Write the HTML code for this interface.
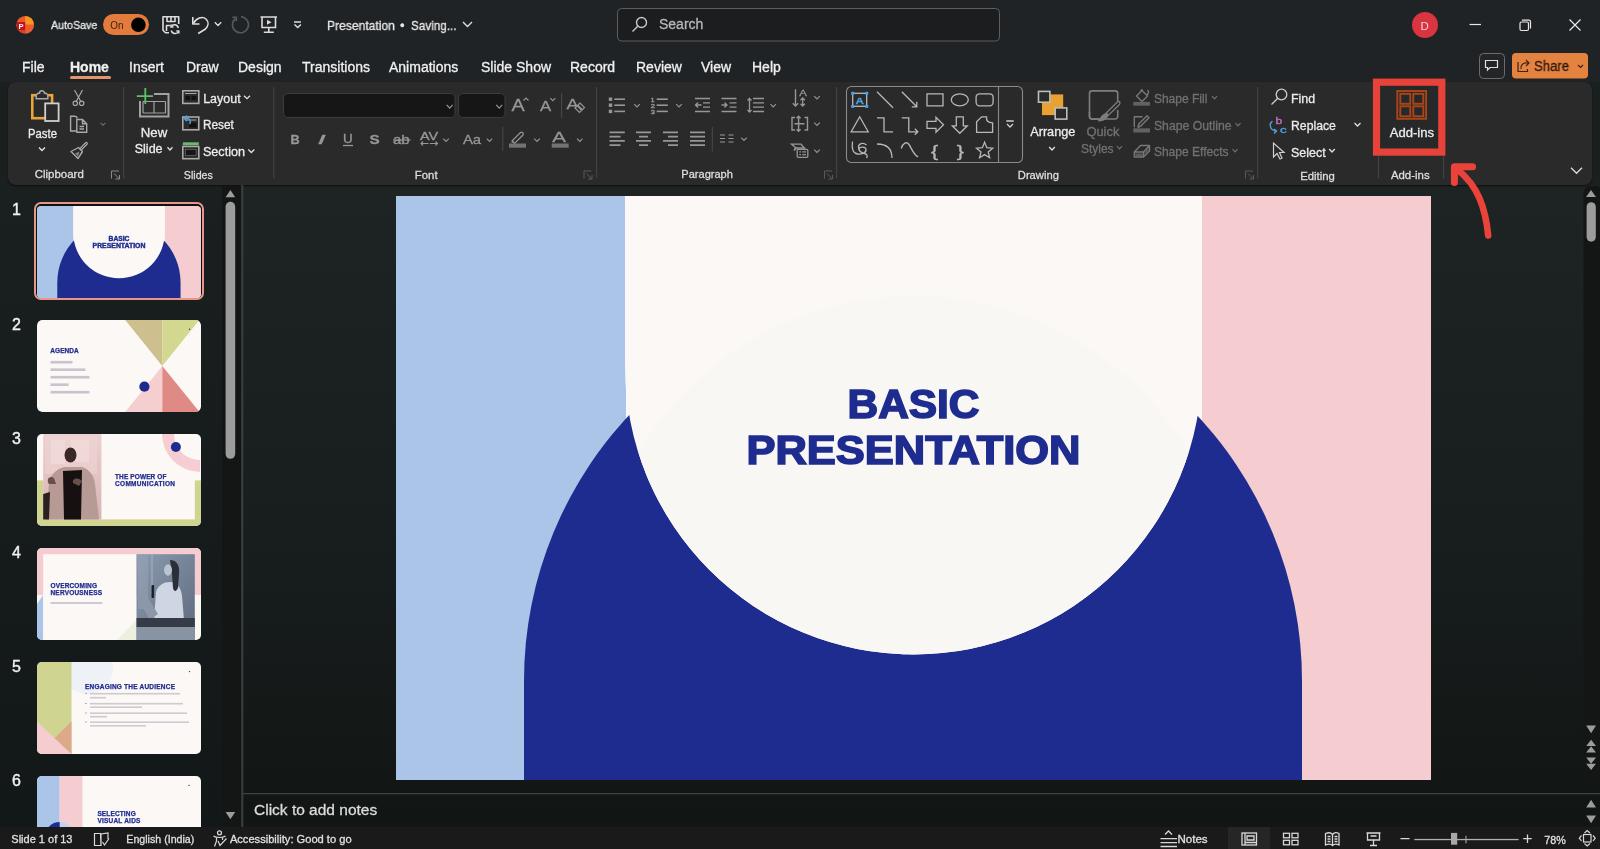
<!DOCTYPE html>
<html><head><meta charset="utf-8">
<style>
*{margin:0;padding:0;box-sizing:border-box}
html,body{width:1600px;height:849px;overflow:hidden;background:#1a1f1f;font-family:"Liberation Sans",sans-serif;color:#e6e6e6}
.a{position:absolute}
.t{position:absolute;white-space:nowrap;line-height:1;-webkit-text-stroke:0.3px currentColor}
svg text{font-family:"Liberation Sans",sans-serif}
svg,.t{will-change:transform}
</style></head><body>
<div class="a" style="left:0;top:0;width:1600px;height:82px;background:#1f2326"></div>
<div class="a" style="left:0;top:185px;width:1600px;height:642px;background:linear-gradient(#1e2324,#181d1d 55%,#111615)"></div>
<div class="a" style="left:0;top:185px;width:222px;height:642px;background:linear-gradient(#1a1f20,#121717)"></div>
<div class="a" style="left:8px;top:82px;width:1584px;height:102.5px;background:#2a2a2a;border-radius:8px;box-shadow:0 1px 1.5px #0c0e0e"></div>
<div class="a" style="left:0;top:827px;width:1600px;height:22px;background:#1a1a1a"></div>
<div class="a" style="left:222px;top:186px;width:19px;height:641px;background:#141616"></div>
<svg class="a" style="left:0;top:185px" width="1600" height="642"><path d="M225.6 12.3 L230.4 5 L235.2 12.3 Z" fill="#9c9c9c"/><rect x="225.6" y="16.8" width="9.6" height="257" rx="4.8" fill="#9c9c9c"/><path d="M225.6 627 L230.4 634.3 L235.2 627 Z" fill="#9c9c9c"/><rect x="241.3" y="0" width="2" height="642" fill="#394040"/><rect x="243" y="608" width="1357" height="1.3" fill="#3a4242"/><rect x="1583.5" y="1" width="20" height="607" rx="7" fill="#141616"/><path d="M1586 12 L1591 5 L1596 12 Z" fill="#9c9c9c"/><rect x="1586.6" y="17.2" width="9.2" height="39.5" rx="4.6" fill="#9c9c9c"/><path d="M1586.2 540.6 L1591.1 548.3 L1596 540.6 Z" fill="#9c9c9c"/><path d="M1586.2 561 L1591.1 554.7 L1596 561 Z M1586.2 567.4 L1591.1 561.2 L1596 567.4 Z" fill="#9c9c9c"/><path d="M1586.2 572.4 L1591.1 578.7 L1596 572.4 Z M1586.2 578.8 L1591.1 585 L1596 578.8 Z" fill="#9c9c9c"/><path d="M1586.2 622.6 L1591.1 614.8 L1596 622.6 Z" fill="#9c9c9c"/><path d="M1586.2 630.4 L1591.1 638.2 L1596 630.4 Z" fill="#9c9c9c"/></svg>
<div class="t" style="left:254px;top:801.5px;font-size:15.5px;color:#dcdcdc;transform:scaleX(1.0);transform-origin:0 0">Click to add notes</div>
<!-- TITLE BAR -->
<svg class="a" style="left:0;top:0" width="1600" height="82">
  <!-- ppt logo -->
  <circle cx="25.2" cy="24.8" r="8.8" fill="#ea5a2e"/>
  <path d="M25.2 24.8 V16 A8.8 8.8 0 0 1 34 24.8 Z" fill="#f7961e"/>
  <path d="M25.2 24.8 H34 A8.8 8.8 0 0 1 25.2 33.6 Z" fill="#ec5d33"/>
  <path d="M16.4 24.8 A8.8 8.8 0 0 0 25.2 33.6 V24.8 Z" fill="#d8402a"/>
  <rect x="17" y="22" width="8.2" height="8" rx="1" fill="#c0141c"/>
  <text x="18.6" y="29.3" font-family="Liberation Sans" font-weight="bold" font-size="7.5" fill="#fff">P</text>
  <!-- toggle -->
  <rect x="103" y="14" width="46" height="21" rx="10.5" fill="#e27b3b"/>
  <circle cx="138.4" cy="24.8" r="7.3" fill="#000"/>
  <text x="110.3" y="28.8" font-family="Liberation Sans" font-size="10.2" fill="#3a2416" textLength="13.2" lengthAdjust="spacingAndGlyphs">On</text>
  <!-- save icon -->
  <g fill="none" stroke="#dcdcdc" stroke-width="1.6" stroke-linejoin="round">
    <path d="M169 32.7 H165.5 L163 30.2 V16.8 H178.7 V24"/>
    <path d="M167 17 V21.5 H175 V17 M171 17 V21.5"/>
    <path d="M166.5 31 V25.5 H170"/>
  </g>
  <g fill="none" stroke="#dcdcdc" stroke-width="1.5">
    <path d="M178.3 28 A4 4 0 0 0 171 26.5 M171.3 30.5 A4 4 0 0 0 178.7 31.5"/>
    <path d="M171 24.5 V27 H173.5 M178.8 33.5 V31 H176.3"/>
  </g>
  <!-- undo -->
  <g fill="none" stroke="#dcdcdc" stroke-width="1.6" stroke-linejoin="round">
    <path d="M192.8 17 V24 H199.5"/>
    <path d="M193.5 23.5 C196 18 202.5 16 206 19 C209 22 208.5 26 205.5 29 L198.2 33.5"/>
    <path d="M214.8 22.3 L218 25.5 L221.2 22.3" stroke-width="1.4"/>
  </g>
  <!-- redo (dim) -->
  <g fill="none" stroke="#56595b" stroke-width="1.6">
    <path d="M235.5 18.5 A8 8 0 1 0 241 16.8"/>
    <path d="M232.3 17.3 H236.3 V21.3"/>
  </g>
  <!-- present -->
  <g fill="none" stroke="#dcdcdc" stroke-width="1.6">
    <path d="M260.5 17 H277 M262 17.5 V27.5 H275.5 V17.5 M268.8 27.5 V32 M263.8 32.3 H273.8"/>
  </g>
  <path d="M267 19.8 L271.5 22.3 L267 24.8 Z" fill="#dcdcdc"/>
  <!-- customize -->
  <g fill="none" stroke="#dcdcdc" stroke-width="1.5">
    <path d="M294 22 H301"/>
    <path d="M294.5 24.5 L297.7 27.5 L300.9 24.5"/>
  </g>
  <!-- title chevron -->
  <path d="M463 22 L467.5 26.5 L472 22" fill="none" stroke="#e0e0e0" stroke-width="1.4"/>
  <!-- search box -->
  <rect x="617.5" y="8.5" width="382" height="32.5" rx="4" fill="#1c1d1e" stroke="#5c5f61" stroke-width="1"/>
  <g fill="none" stroke="#c8c8c8" stroke-width="1.4">
    <circle cx="641.5" cy="22.5" r="5"/>
    <path d="M638 26 L632.5 31.5"/>
  </g>
  <!-- avatar -->
  <circle cx="1425" cy="25" r="13" fill="#d93540"/>
  <text x="1420.5" y="29.5" font-family="Liberation Sans" font-size="11.5" fill="#f4d0d0">D</text>
  <!-- window controls -->
  <path d="M1469.5 24.5 H1481" stroke="#e8e8e8" stroke-width="1.2"/>
  <g fill="none" stroke="#e8e8e8" stroke-width="1.2">
    <rect x="1520" y="22" width="8.5" height="8.5" rx="1.5"/>
    <path d="M1522 20.2 H1529 A1.5 1.5 0 0 1 1530.5 21.7 V28.5"/>
  </g>
  <path d="M1569.5 19.5 L1580.5 30.5 M1580.5 19.5 L1569.5 30.5" stroke="#e8e8e8" stroke-width="1.2"/>
  <!-- comment button -->
  <rect x="1479.5" y="53.5" width="25" height="25" rx="4" fill="#232527" stroke="#6a6d70" stroke-width="1"/>
  <path d="M1485.5 60.5 H1497.5 V67.5 H1490 L1487.5 70 V67.5 H1485.5 Z" fill="none" stroke="#e0e0e0" stroke-width="1.2"/>
  <!-- share button -->
  <rect x="1512" y="53" width="76" height="25.5" rx="4" fill="#e4823f"/>
  <g fill="none" stroke="#3a2414" stroke-width="1.2">
    <path d="M1518 62 V71.5 H1527.5 V69"/>
    <path d="M1521 69 A5 5 0 0 1 1527 63 H1529 M1526 60 L1529 63 L1526 66"/>
    <path d="M1578 65 L1580.5 67.5 L1583 65"/>
  </g>
  <!-- Home underline -->
  <rect x="70" y="76" width="41" height="3" rx="1.5" fill="#e5956b"/>
</svg>
<div class="t" style="left:50.6px;top:20.3px;font-size:11.4px;color:#ececec;transform:scaleX(0.94);transform-origin:0 0">AutoSave</div>
<div class="t" style="left:327px;top:18.5px;font-size:13px;color:#e8e8e8;transform:scaleX(0.93);transform-origin:0 0">Presentation</div><div class="t" style="left:400px;top:18.5px;font-size:13px;color:#e8e8e8">•</div><div class="t" style="left:411px;top:18.5px;font-size:13px;color:#e8e8e8;transform:scaleX(0.9);transform-origin:0 0">Saving...</div>
<div class="t" style="left:659px;top:17px;font-size:14px;color:#b8b8b8">Search</div>
<div class="t" style="left:1534.3px;top:59.6px;font-size:13.8px;color:#2c1a0e;transform:scaleX(0.95);transform-origin:0 0">Share</div>
<div class="t" style="left:22px;top:60px;font-size:14px;color:#f0f0f0">File</div>
<div class="t" style="left:70px;top:60px;font-size:14px;font-weight:bold;color:#f0f0f0">Home</div>
<div class="t" style="left:129px;top:60px;font-size:14px;color:#f0f0f0">Insert</div>
<div class="t" style="left:186px;top:60px;font-size:14px;color:#f0f0f0">Draw</div>
<div class="t" style="left:238px;top:60px;font-size:14px;color:#f0f0f0">Design</div>
<div class="t" style="left:302px;top:60px;font-size:14px;color:#f0f0f0">Transitions</div>
<div class="t" style="left:389px;top:60px;font-size:14px;color:#f0f0f0">Animations</div>
<div class="t" style="left:481px;top:60px;font-size:14px;color:#f0f0f0">Slide Show</div>
<div class="t" style="left:570px;top:60px;font-size:14px;color:#f0f0f0">Record</div>
<div class="t" style="left:636px;top:60px;font-size:14px;color:#f0f0f0">Review</div>
<div class="t" style="left:701px;top:60px;font-size:14px;color:#f0f0f0">View</div>
<div class="t" style="left:752px;top:60px;font-size:14px;color:#f0f0f0">Help</div>


<svg class="a" style="left:0;top:0" width="1600" height="260" font-family="Liberation Sans">
<rect x="32.3" y="95.2" width="19.8" height="23" fill="none" stroke="#e9a43a" stroke-width="2.6"/>
<path d="M36.2 98.8 V95 L38 93.2 H39.5 A2.5 2.5 0 0 1 44.5 93.2 H46 L47.8 95 V98.8 Z" fill="#2a2a2a" stroke="#a8a8a8" stroke-width="1.5"/>
<rect x="45.2" y="103.4" width="13.4" height="17.6" fill="#2a2a2a" stroke="#d0d0d0" stroke-width="1.8"/>
<text x="28.0" y="138.4" font-size="12.5" fill="#ececec" stroke="#ececec" stroke-width="0.3" textLength="29.0" lengthAdjust="spacingAndGlyphs" >Paste</text>
<path d="M39.0 147.5 L42.0 150.5 L45.0 147.5" fill="none" stroke="#e0e0e0" stroke-width="1.4"/>
<g fill="none" stroke="#a9a9a9" stroke-width="1.2"><circle cx="75.3" cy="103.3" r="2.2"/><circle cx="81.7" cy="103.3" r="2.2"/><path d="M76.3 101.3 L82.5 90 M80.7 101.3 L74.5 90"/></g>
<g fill="none" stroke="#a9a9a9" stroke-width="1.4"><path d="M76 131 H70.6 V116.3 H75 Q76.8 116.3 77.3 118.5"/><path d="M76.8 119.5 H82.5 L86.7 123.7 V132.2 H76.8 Z M82.5 119.5 V123.7 H86.7"/><path d="M79.5 126.5 H84 M79.5 129 H84"/></g>
<path d="M100.5 122.8 L103.0 125.2 L105.5 122.8" fill="none" stroke="#6e6e6e" stroke-width="1.1"/>
<path d="M86.3 143.5 L81 148.8" stroke="#a9a9a9" stroke-width="3.2" stroke-linecap="round"/><path d="M86.3 143.5 L81 148.8" stroke="#2a2a2a" stroke-width="1" stroke-linecap="round"/>
<path d="M71 151.5 L78.5 147.5 L82.5 151.5 L78 158.5 Z" fill="none" stroke="#a9a9a9" stroke-width="1.4" stroke-linejoin="round"/>
<path d="M75 153.5 L79.5 151.5 L78 156.5 Z" fill="#a9a9a9" opacity="0.7"/>
<text x="34.7" y="178.2" font-size="11.5" fill="#dedede" stroke="#dedede" stroke-width="0.3" textLength="49.1" lengthAdjust="spacingAndGlyphs" >Clipboard</text>
<g fill="none" stroke="#8a8a8a" stroke-width="1"><path d="M111.5 178.5 V171.0 H119"/><path d="M114 173.5 L119.5 179.0 M115.5 179.0 H119.5 V175.0"/></g>
<path d="M123.7 87 V178" stroke="#474747" stroke-width="1"/>
<g fill="none" stroke="#a2a2a2" stroke-width="2"><rect x="140" y="94" width="28.5" height="22.5"/><path d="M143 101.5 H165.5 M154 101.5 V113 M143 113 H165.5 M143 101.5 V113 M165.5 101.5 V113" stroke-width="1.2"/></g>
<rect x="136" y="92" width="18" height="9" fill="#2a2a2a"/>
<path d="M136.8 96.2 H153 M145.3 88 V104" stroke="#5cc06a" stroke-width="1.8"/>
<text x="140.8" y="137.0" font-size="12.5" fill="#ececec" stroke="#ececec" stroke-width="0.3" textLength="26.4" lengthAdjust="spacingAndGlyphs" >New</text>
<text x="134.7" y="153.2" font-size="12.5" fill="#ececec" stroke="#ececec" stroke-width="0.3" textLength="27.9" lengthAdjust="spacingAndGlyphs" >Slide</text>
<path d="M167.5 147.2 L170.0 150.0 L172.5 147.2" fill="none" stroke="#e0e0e0" stroke-width="1.3"/>
<g fill="none" stroke="#a9a9a9"><rect x="182.8" y="90.8" width="16" height="12.6" stroke-width="1.6"/><path d="M185 93.5 H196.5" stroke-width="1"/></g><rect x="185.5" y="96" width="4.5" height="4" fill="#111"/><rect x="191.5" y="96" width="5" height="4" fill="#111"/>
<text x="203.2" y="102.8" font-size="12.5" fill="#ececec" stroke="#ececec" stroke-width="0.3" textLength="37.4" lengthAdjust="spacingAndGlyphs" >Layout</text>
<path d="M244.0 95.7 L247.0 98.7 L250.0 95.7" fill="none" stroke="#e0e0e0" stroke-width="1.3"/>
<g fill="none" stroke="#a9a9a9"><rect x="182.8" y="117" width="16" height="12.8" stroke-width="1.6"/><path d="M185 120 H196.5" stroke-width="1"/></g><rect x="189" y="122.5" width="7.5" height="5" fill="#111"/>
<path d="M184 118.5 L187 115.5 M184 118.5 L187 121 M184.5 118.5 H187.5 A3.3 3.3 0 0 1 189.5 124" fill="none" stroke="#4ea4e0" stroke-width="1.4"/>
<text x="202.9" y="129.0" font-size="12.5" fill="#ececec" stroke="#ececec" stroke-width="0.3" textLength="31.0" lengthAdjust="spacingAndGlyphs" >Reset</text>
<rect x="182.8" y="142.3" width="16" height="3" fill="#6abb6e"/><rect x="182.8" y="146.5" width="16" height="12.2" fill="none" stroke="#a9a9a9" stroke-width="1.6"/><rect x="185.5" y="149.5" width="10.6" height="6" fill="#161616" stroke="#777" stroke-width="0.6"/>
<text x="202.9" y="155.8" font-size="12.5" fill="#ececec" stroke="#ececec" stroke-width="0.3" textLength="42.1" lengthAdjust="spacingAndGlyphs" >Section</text>
<path d="M248.3 149.5 L251.3 152.5 L254.3 149.5" fill="none" stroke="#e0e0e0" stroke-width="1.3"/>
<text x="183.8" y="179.0" font-size="11.5" fill="#dedede" stroke="#dedede" stroke-width="0.3" textLength="29.0" lengthAdjust="spacingAndGlyphs" >Slides</text>
<path d="M273.8 87 V178" stroke="#474747" stroke-width="1"/>
<rect x="283.5" y="93.5" width="171.5" height="24" rx="4.5" fill="#161616" stroke="#3c3c3c"/>
<path d="M446.7 104.9 L449.7 108.1 L452.7 104.9" fill="none" stroke="#979797" stroke-width="1.2"/>
<rect x="458.5" y="93.5" width="46.5" height="24" rx="4.5" fill="#161616" stroke="#3c3c3c"/>
<path d="M496.2 104.9 L499.2 108.1 L502.2 104.9" fill="none" stroke="#979797" stroke-width="1.2"/>
<text x="511.4" y="111.0" font-size="17" fill="#979797" stroke="#979797" stroke-width="0.3" textLength="13.2" lengthAdjust="spacingAndGlyphs" >A</text>
<path d="M523.5 100.5 L526 98 L528.5 100.5" fill="none" stroke="#979797" stroke-width="1.1"/>
<text x="539.9" y="111.0" font-size="14" fill="#979797" stroke="#979797" stroke-width="0.3" textLength="11.2" lengthAdjust="spacingAndGlyphs" >A</text>
<path d="M550.3 98.2 L552.8 100.7 L555.3 98.2" fill="none" stroke="#979797" stroke-width="1.1"/>
<path d="M561.6 93 V118" stroke="#4a4a4a" stroke-width="1"/>
<text x="566.4" y="109.0" font-size="15" fill="#979797" stroke="#979797" stroke-width="0.3" textLength="12.2" lengthAdjust="spacingAndGlyphs" >A</text>
<path d="M575 108 L580 103 L584.5 107.5 L579.5 112.5 Z" fill="#2a2a2a" stroke="#979797" stroke-width="1.2"/><path d="M577.5 105.5 L582 110" stroke="#979797" stroke-width="2"/>
<text x="290.4" y="143.5" font-size="13" fill="#979797" stroke="#979797" stroke-width="0.3" font-weight="bold" textLength="9.2" lengthAdjust="spacingAndGlyphs" >B</text>
<text x="317.4" y="143.5" font-size="13" fill="#979797" stroke="#979797" stroke-width="0.3" textLength="8.2" lengthAdjust="spacingAndGlyphs" font-style="italic" font-family="Liberation Serif">I</text>
<text x="342.9" y="143.0" font-size="12.5" fill="#979797" stroke="#979797" stroke-width="0.3" textLength="9.7" lengthAdjust="spacingAndGlyphs" >U</text>
<path d="M343 145.5 H353" stroke="#979797" stroke-width="1.3"/>
<text x="369.4" y="144.0" font-size="13.5" fill="#979797" stroke="#979797" stroke-width="0.3" font-weight="bold" textLength="10.2" lengthAdjust="spacingAndGlyphs" >S</text>
<text x="392.9" y="144.0" font-size="12" fill="#979797" stroke="#979797" stroke-width="0.3" textLength="16.7" lengthAdjust="spacingAndGlyphs" >ab</text>
<path d="M393 140 H410.5" stroke="#979797" stroke-width="1.2"/>
<text x="419.9" y="140.0" font-size="11" fill="#979797" stroke="#979797" stroke-width="0.3" textLength="18.2" lengthAdjust="spacingAndGlyphs" >AV</text>
<path d="M421 143.5 H428.5 M423 141.5 L421 143.5 L423 145.5 M430 143.5 H437.5 M435.5 141.5 L437.5 143.5 L435.5 145.5" fill="none" stroke="#979797" stroke-width="1.1"/>
<path d="M443.2 138.6 L446.0 141.4 L448.8 138.6" fill="none" stroke="#979797" stroke-width="1.1"/>
<text x="462.9" y="144.0" font-size="13" fill="#979797" stroke="#979797" stroke-width="0.3" textLength="18.2" lengthAdjust="spacingAndGlyphs" >Aa</text>
<path d="M486.8 138.6 L489.5 141.4 L492.2 138.6" fill="none" stroke="#979797" stroke-width="1.1"/>
<path d="M502.8 127 V151" stroke="#4a4a4a" stroke-width="1"/>
<path d="M512 141 L520.5 132.5 A1.8 1.8 0 0 1 523 135 L514.5 143.5 Z" fill="none" stroke="#979797" stroke-width="1.2"/><path d="M511 143 L513 141 L514 142 Z" fill="#979797"/>
<rect x="509" y="143.5" width="17" height="4.2" fill="#737373"/>
<path d="M534.2 138.6 L537.0 141.4 L539.8 138.6" fill="none" stroke="#979797" stroke-width="1.1"/>
<text x="552.2" y="142.3" font-size="15" fill="#979797" stroke="#979797" stroke-width="0.3" textLength="13.7" lengthAdjust="spacingAndGlyphs" >A</text>
<rect x="551.7" y="143.5" width="17" height="4.2" fill="#737373"/>
<path d="M577.0 138.6 L579.8 141.4 L582.5 138.6" fill="none" stroke="#979797" stroke-width="1.1"/>
<text x="414.8" y="178.6" font-size="11.5" fill="#dedede" stroke="#dedede" stroke-width="0.3" textLength="22.8" lengthAdjust="spacingAndGlyphs" >Font</text>
<g fill="none" stroke="#5a5a5a" stroke-width="1"><path d="M584.0 178.5 V171.0 H591.5"/><path d="M586.5 173.5 L592.0 179.0 M588.0 179.0 H592.0 V175.0"/></g>
<path d="M596.6 87 V178" stroke="#474747" stroke-width="1"/>
<g fill="none" stroke="#979797" stroke-width="1.3">
<rect x="608.8" y="97.5" width="3.4" height="3.4" fill="#979797" stroke="none"/>
<path d="M614.3 99.2 H625" stroke-width="1.6"/>
<rect x="608.8" y="103.5" width="3.4" height="3.4" fill="#979797" stroke="none"/>
<path d="M614.3 105.2 H625" stroke-width="1.6"/>
<rect x="608.8" y="109.7" width="3.4" height="3.4" fill="#979797" stroke="none"/>
<path d="M614.3 111.4 H625" stroke-width="1.6"/>
<path d="M656.7 99.2 H667.8" stroke-width="1.6"/>
<path d="M656.7 105.2 H667.8" stroke-width="1.6"/>
<path d="M656.7 111.4 H667.8" stroke-width="1.6"/>
</g>
<text x="650.7" y="102.2" font-size="4.5" fill="#979797" stroke="#979797" stroke-width="0.3" textLength="3.7" lengthAdjust="spacingAndGlyphs" >1</text>
<text x="650.7" y="108.2" font-size="4.5" fill="#979797" stroke="#979797" stroke-width="0.3" textLength="4.2" lengthAdjust="spacingAndGlyphs" >2</text>
<text x="650.7" y="114.2" font-size="4.5" fill="#979797" stroke="#979797" stroke-width="0.3" textLength="4.2" lengthAdjust="spacingAndGlyphs" >3</text>
<path d="M634.2 104.1 L637.0 106.9 L639.8 104.1" fill="none" stroke="#979797" stroke-width="1.1"/>
<path d="M676.2 104.1 L679.0 106.9 L681.8 104.1" fill="none" stroke="#979797" stroke-width="1.1"/>
<g fill="none" stroke="#979797" stroke-width="1.3"><path d="M695 98.5 H710 M703 102.8 H710 M703 107.2 H710 M695 111.5 H710"/><path d="M701.5 105 H695.5 M698 102.5 L695.5 105 L698 107.5"/><path d="M721.5 98.5 H736.5 M729.5 102.8 H736.5 M729.5 107.2 H736.5 M721.5 111.5 H736.5"/><path d="M721.5 105 H727 M724.5 102.5 L727 105 L724.5 107.5"/><path d="M753 98.5 H764 M753 102.8 H764 M753 107.2 H764 M753 111.5 H764"/><path d="M749.5 98.5 V112 M747.5 100.5 L749.5 98.5 L751.5 100.5 M747.5 110 L749.5 112 L751.5 110"/></g>
<path d="M770.5 104.1 L773.2 106.9 L776.0 104.1" fill="none" stroke="#979797" stroke-width="1.1"/>
<path d="M609.5 132.3 H624.8 M609.5 136.6 H620.5 M609.5 140.9 H624.8 M609.5 145.2 H620.5 M636 132.3 H651 M639 136.6 H648 M636 140.9 H651 M639 145.2 H648 M663 132.3 H678 M668 136.6 H678 M663 140.9 H678 M668 145.2 H678 M690 132.3 H705 M690 136.6 H705 M690 140.9 H705 M690 145.2 H705" fill="none" stroke="#979797" stroke-width="1.8"/>
<path d="M712.3 127 V151.5" stroke="#4a4a4a" stroke-width="1"/>
<path d="M720 135 H725 M728.5 135 H733.5 M720 138.5 H725 M728.5 138.5 H733.5 M720 142 H725 M728.5 142 H733.5" fill="none" stroke="#979797" stroke-width="1.2"/>
<path d="M741.2 137.6 L744.0 140.4 L746.8 137.6" fill="none" stroke="#979797" stroke-width="1.1"/>
<g fill="none" stroke="#979797" stroke-width="1.3"><path d="M795.5 89.2 V106 M792.8 103.3 L795.5 106 L798.2 103.3" stroke-width="1.4"/><path d="M802.7 98 V106 M800.5 100.2 L802.7 98 L804.9 100.2 M800.5 103.8 L802.7 106 L804.9 103.8" stroke-width="1.3"/><path d="M795 117.5 H792 V130 H795 M804.5 117.5 H807.5 V130 H804.5 M794.5 123.8 H804.5 M798.6 116.2 V131.2 M796.6 118.2 L798.6 116.2 L800.6 118.2 M796.6 129.2 L798.6 131.2 L800.6 129.2" stroke-width="1.4"/><rect x="797.2" y="149.3" width="10.6" height="8" rx="1"/><path d="M799.3 151.8 H801 M802.3 151.8 H806 M799.3 154.6 H801 M802.3 154.6 H806"/><path d="M791.5 144.2 H801 L804.5 148 H796.5 L794 150.5 L795.5 147.5 Z" fill="none"/></g>
<text x="799.2" y="96.3" font-size="9" fill="#979797" stroke="#979797" stroke-width="0.3" textLength="7.6" lengthAdjust="spacingAndGlyphs" >A</text>
<path d="M814.2 96.1 L817.0 98.9 L819.8 96.1" fill="none" stroke="#979797" stroke-width="1.1"/>
<path d="M814.2 122.6 L817.0 125.4 L819.8 122.6" fill="none" stroke="#979797" stroke-width="1.1"/>
<path d="M814.2 149.6 L817.0 152.4 L819.8 149.6" fill="none" stroke="#979797" stroke-width="1.1"/>
<text x="681.3" y="178.4" font-size="11.5" fill="#dedede" stroke="#dedede" stroke-width="0.3" textLength="51.6" lengthAdjust="spacingAndGlyphs" >Paragraph</text>
<g fill="none" stroke="#5a5a5a" stroke-width="1"><path d="M824.5 178.5 V171.0 H832"/><path d="M827 173.5 L832.5 179.0 M828.5 179.0 H832.5 V175.0"/></g>
<path d="M836.7 87 V178" stroke="#474747" stroke-width="1"/>
<rect x="846.5" y="86.5" width="176" height="76" rx="5" fill="none" stroke="#8a8a8a" stroke-width="1.1"/>
<path d="M998.5 87 V162" stroke="#8a8a8a" stroke-width="1.1"/>
<path d="M1006.3 121 H1013.7 M1007 124 L1010 127 L1013 124" fill="none" stroke="#d0d0d0" stroke-width="1.3"/>
<rect x="852.7" y="93.3" width="14" height="13" fill="none" stroke="#b8b8b8" stroke-width="1.3"/>
<rect x="851.1" y="91.7" width="3.2" height="3.2" rx="0.8" fill="#4aa0e6"/>
<rect x="851.1" y="104.7" width="3.2" height="3.2" rx="0.8" fill="#4aa0e6"/>
<rect x="865.1" y="91.7" width="3.2" height="3.2" rx="0.8" fill="#4aa0e6"/>
<rect x="865.1" y="104.7" width="3.2" height="3.2" rx="0.8" fill="#4aa0e6"/>
<text x="855.5" y="103.6" font-size="9.5" fill="#4aa0e6" stroke="#4aa0e6" stroke-width="0.3" font-weight="bold" textLength="8.4" lengthAdjust="spacingAndGlyphs" >A</text>
<ellipse cx="959.8" cy="99.8" rx="8.5" ry="6" fill="none" stroke="#b8b8b8" stroke-width="1.3"/>
<rect x="976.1" y="93.8" width="17" height="12" rx="3.5" fill="none" stroke="#b8b8b8" stroke-width="1.3"/>
<path d="M877 91.8 L893 107.8 M901.8 91.8 L916.8 106.8 M916.8 101.8 V106.8 H911.8 M927 93.8 H943 V105.8 H927 Z M851.2 131.8 L859.7 116.8 L868.2 131.8 Z M877 117.8 H884 V131.8 H893 M901.8 117.8 H908.8 V131.8 H917.8 M914.8 128.8 L917.8 131.8 L914.8 134.8 M927 121.3 H936 V117.3 L943.5 124.8 L936 132.3 V128.3 H927 Z M956.3 116.8 H963.3 V125.8 H967.3 L959.8 133.3 L952.3 125.8 H956.3 Z M976.6 132.3 V121.8 L981.6 116.8 H986.6 Q985.6 122.8 992.6 122.8 V132.3 Z M852.5 141.5 C851.5 149 853 153.5 857.5 154 C862 154.5 866.5 152.5 866 149.5 C865.5 146.5 860 146.5 859 149 M866.5 145 C863 142 858.5 143.5 858.5 147 C858.5 151 862 153 864.5 153.5 C867 154 868 156 866.5 158 M877 144 Q892 144 892 158 M901.2 148.5 C903 143 906.5 141 909 144.5 C911.5 148 913.5 155 918.2 156.8" fill="none" stroke="#b8b8b8" stroke-width="1.3"/>
<text x="930.9" y="156.5" font-size="16" fill="#b8b8b8" stroke="#b8b8b8" stroke-width="0.3" textLength="7.2" lengthAdjust="spacingAndGlyphs" >{</text>
<text x="956.7" y="156.5" font-size="16" fill="#b8b8b8" stroke="#b8b8b8" stroke-width="0.3" textLength="7.2" lengthAdjust="spacingAndGlyphs" >}</text>
<polygon points="984.6,142.3 986.8,147.7 992.7,148.2 988.2,152.0 989.6,157.7 984.6,154.6 979.6,157.7 981.0,152.0 976.5,148.2 982.4,147.7" fill="none" stroke="#b8b8b8" stroke-width="1.3"/>
<rect x="1042" y="94.4" width="21.2" height="20.7" fill="#e9a131"/>
<rect x="1038.5" y="91.4" width="11.4" height="10.8" fill="#2a2a2a" stroke="#bdbdbd" stroke-width="1.6"/>
<rect x="1055.2" y="107.9" width="11.6" height="11.2" fill="#2a2a2a" stroke="#bdbdbd" stroke-width="1.6"/>
<text x="1030.2" y="136.4" font-size="12.5" fill="#ececec" stroke="#ececec" stroke-width="0.3" textLength="45.2" lengthAdjust="spacingAndGlyphs" >Arrange</text>
<path d="M1049.2 147.0 L1052.0 150.0 L1054.8 147.0" fill="none" stroke="#e0e0e0" stroke-width="1.3"/>
<rect x="1089.5" y="90.9" width="28.2" height="28.2" rx="2.5" fill="none" stroke="#7e7e7e" stroke-width="1.6"/>
<rect x="1102" y="104" width="18.5" height="17" fill="#2a2a2a"/>
<path d="M1119.3 101.5 C1120.5 102.5 1120 104 1118.5 105.5 L1108.5 115.2 L1106.2 113 L1116.3 103 C1117.5 101.8 1118.5 101 1119.3 101.5 Z" fill="#2a2a2a" stroke="#7e7e7e" stroke-width="1.3"/>
<path d="M1106.3 113 L1108.6 115.3 C1107 120 1102 122 1097.5 121.3 C1100 119 1101 114 1106.3 113 Z" fill="#7e7e7e"/>
<path d="M1089.5 112 V116.5 A2.5 2.5 0 0 0 1092 119 H1099 M1104.5 119 H1115.2 A2.5 2.5 0 0 0 1117.7 116.5 V110" fill="none" stroke="#7e7e7e" stroke-width="1.6"/>
<text x="1086.4" y="136.4" font-size="12.5" fill="#727272" stroke="#727272" stroke-width="0.3" textLength="33.0" lengthAdjust="spacingAndGlyphs" >Quick</text>
<text x="1081.0" y="153.0" font-size="12.5" fill="#727272" stroke="#727272" stroke-width="0.3" textLength="32.6" lengthAdjust="spacingAndGlyphs" >Styles</text>
<path d="M1117.0 146.2 L1119.5 148.8 L1122.0 146.2" fill="none" stroke="#727272" stroke-width="1.2"/>
<g fill="none" stroke="#787878" stroke-width="1.4" stroke-linejoin="round"><path d="M1136.5 96 L1142 90.5 L1147.5 96 L1142 101.5 Z"/><path d="M1140.5 91 L1142.5 89.3 M1147 95 C1149 93 1149 91 1147.5 90"/><path d="M1134.3 127.3 V116.8 H1142.5 M1138 127.3 L1138.8 124 L1147 115.8 L1149 117.8 L1140.8 126 Z"/><path d="M1134.3 152 L1140.5 145.5 H1149.5 V151 L1143.5 157 H1134.3 Z M1134.3 152 H1143.5 L1149.5 145.5 M1143.5 152 V157"/></g>
<rect x="1133.3" y="101.9" width="16.7" height="3.8" fill="#626262"/>
<rect x="1133.3" y="128.3" width="16.7" height="4.2" fill="#626262"/>
<path d="M1135.5 153.5 H1142.5 V156 H1135.5 Z M1144.5 152 L1148.5 148 V150.5 L1144.5 154.5 Z" fill="#5c5c5c"/>
<text x="1153.9" y="102.8" font-size="12.5" fill="#727272" stroke="#727272" stroke-width="0.3" textLength="53.5" lengthAdjust="spacingAndGlyphs" >Shape Fill</text>
<path d="M1212.0 96.2 L1214.5 98.8 L1217.0 96.2" fill="none" stroke="#727272" stroke-width="1.2"/>
<text x="1153.9" y="129.5" font-size="12.5" fill="#727272" stroke="#727272" stroke-width="0.3" textLength="77.7" lengthAdjust="spacingAndGlyphs" >Shape Outline</text>
<path d="M1235.5 123.2 L1238.0 125.8 L1240.5 123.2" fill="none" stroke="#727272" stroke-width="1.2"/>
<text x="1153.9" y="155.6" font-size="12.5" fill="#727272" stroke="#727272" stroke-width="0.3" textLength="74.7" lengthAdjust="spacingAndGlyphs" >Shape Effects</text>
<path d="M1232.5 149.2 L1235.0 151.8 L1237.5 149.2" fill="none" stroke="#727272" stroke-width="1.2"/>
<text x="1017.8" y="178.5" font-size="11.5" fill="#dedede" stroke="#dedede" stroke-width="0.3" textLength="41.1" lengthAdjust="spacingAndGlyphs" >Drawing</text>
<g fill="none" stroke="#5a5a5a" stroke-width="1"><path d="M1245.5 178.5 V171.0 H1253"/><path d="M1248 173.5 L1253.5 179.0 M1249.5 179.0 H1253.5 V175.0"/></g>
<path d="M1257.7 87 V178" stroke="#474747" stroke-width="1"/>
<g fill="none" stroke="#cfcfcf" stroke-width="1.3"><circle cx="1281.5" cy="94.5" r="5.3"/><path d="M1277.8 98.3 L1271.5 104.5"/></g>
<text x="1291.0" y="102.5" font-size="12.5" fill="#ececec" stroke="#ececec" stroke-width="0.3" textLength="24.1" lengthAdjust="spacingAndGlyphs" >Find</text>
<g fill="none" stroke-width="1.3"><path d="M1272.5 121 C1268.5 124 1270 131 1277 131 M1274 129 L1276.5 131 L1274 133.5" stroke="#4ea4e0"/></g>
<text x="1275.4" y="124.0" font-size="9" fill="#c870c8" stroke="#c870c8" stroke-width="0.3" textLength="6.7" lengthAdjust="spacingAndGlyphs" >b</text>
<text x="1279.9" y="133.0" font-size="9" fill="#4ea4e0" stroke="#4ea4e0" stroke-width="0.3" textLength="6.7" lengthAdjust="spacingAndGlyphs" >c</text>
<text x="1291.0" y="129.9" font-size="12.5" fill="#ececec" stroke="#ececec" stroke-width="0.3" textLength="44.9" lengthAdjust="spacingAndGlyphs" >Replace</text>
<path d="M1354.5 123.0 L1357.5 126.0 L1360.5 123.0" fill="none" stroke="#e0e0e0" stroke-width="1.3"/>
<path d="M1273.5 143 V157 L1277 153.5 L1280 159 L1282 158 L1279.5 152.5 H1284 Z" fill="none" stroke="#cfcfcf" stroke-width="1.2"/>
<text x="1291.0" y="156.6" font-size="12.5" fill="#ececec" stroke="#ececec" stroke-width="0.3" textLength="34.6" lengthAdjust="spacingAndGlyphs" >Select</text>
<path d="M1329.2 149.0 L1332.0 152.0 L1334.8 149.0" fill="none" stroke="#e0e0e0" stroke-width="1.3"/>
<text x="1300.2" y="179.6" font-size="11.5" fill="#dedede" stroke="#dedede" stroke-width="0.3" textLength="34.6" lengthAdjust="spacingAndGlyphs" >Editing</text>
<path d="M1378.6 156 V178.5" stroke="#474747" stroke-width="1"/>
<rect x="1376.5" y="82.2" width="65.3" height="69.9" fill="#262829"/>
<rect x="1376.5" y="82.2" width="65.3" height="69.9" fill="none" stroke="#e8433a" stroke-width="7.2"/>
<g fill="none" stroke="#ab4519" stroke-width="1.9"><rect x="1397.3" y="91" width="28.8" height="27.8"/><rect x="1400.3" y="93.8" width="10" height="10"/><rect x="1413.3" y="93.8" width="10" height="10"/><rect x="1400.3" y="106.3" width="10" height="10"/><rect x="1413.3" y="106.3" width="10" height="10"/></g>
<text x="1389.7" y="136.5" font-size="12.5" fill="#ececec" stroke="#ececec" stroke-width="0.3" textLength="44.3" lengthAdjust="spacingAndGlyphs" >Add-ins</text>
<text x="1390.9" y="179.3" font-size="11.5" fill="#dedede" stroke="#dedede" stroke-width="0.3" textLength="38.7" lengthAdjust="spacingAndGlyphs" >Add-ins</text>
<path d="M1443.6 156 V178.5" stroke="#474747" stroke-width="1"/>
<path d="M1571.0 167.8 L1576.5 173.2 L1582.0 167.8" fill="none" stroke="#d8d8d8" stroke-width="1.4"/>
<path d="M1488.2 235.5 C1485.5 208 1478 186 1457.5 169.5" fill="none" stroke="#ea433a" stroke-width="6.6" stroke-linecap="round"/>
<path d="M1472.6 166.8 H1454.4 V182.5" fill="none" stroke="#ea433a" stroke-width="7" stroke-linecap="round" stroke-linejoin="round"/>
</svg>
<svg class="a" style="left:396px;top:196px" width="1035" height="584" viewBox="0 0 1035 584">
  <defs><radialGradient id="wg" cx="0.5" cy="0.62" r="0.5"><stop offset="0.9" stop-color="#f8f7f3"/><stop offset="1" stop-color="#fbf8f5"/></radialGradient></defs>
  <rect width="1035" height="584" fill="#fbf8f5"/>
  <rect x="0" y="0" width="230" height="584" fill="#abc5e9"/>
  <rect x="806" y="0" width="229" height="584" fill="#f5cdd1"/>
  <path d="M128 584 V485 A389 389 0 0 1 906 485 V584 Z" fill="#1f2c8f"/>
  <path d="M229 0 H806 V170 A288.5 288.5 0 0 1 229 170 Z" fill="#fbf8f5"/>
  <clipPath id="arch"><path d="M229 0 H806 V170 A288.5 288.5 0 0 1 229 170 Z"/></clipPath>
  <circle cx="517.5" cy="420" r="320" fill="#f8f7f3" clip-path="url(#arch)"/>
  <text x="517.5" y="222" text-anchor="middle" font-family="Liberation Sans" font-weight="bold" font-size="40" fill="#1f2c8f" stroke="#1f2c8f" stroke-width="1.6" textLength="132" lengthAdjust="spacingAndGlyphs">BASIC</text>
  <text x="517.5" y="268" text-anchor="middle" font-family="Liberation Sans" font-weight="bold" font-size="40" fill="#1f2c8f" stroke="#1f2c8f" stroke-width="1.6" textLength="334" lengthAdjust="spacingAndGlyphs">PRESENTATION</text>
</svg>
<div class="a" style="left:34.3px;top:202.4px;width:170.2px;height:98.1px;border:2.8px solid #e8968a;border-radius:7px;background:#0f1212"></div>
<svg class="a" style="left:37px;top:205.5px" width="164" height="92" viewBox="0 0 1035 584" preserveAspectRatio="none"><defs><clipPath id="c1"><rect width="1035" height="584" rx="27"/></clipPath></defs><g clip-path="url(#c1)"><rect width="1035" height="584" fill="#fbf8f5"/><rect width="230" height="584" fill="#abc5e9"/><rect x="806" width="229" height="584" fill="#f5cdd1"/><path d="M128 584 V485 A389 389 0 0 1 906 485 V584 Z" fill="#1f2c8f"/><path d="M229 0 H806 V170 A288.5 288.5 0 0 1 229 170 Z" fill="#fbf8f5"/><text x="517.5" y="222" text-anchor="middle" font-family="Liberation Sans" font-weight="bold" font-size="40" fill="#1f2c8f" stroke="#1f2c8f" stroke-width="2.5" textLength="132" lengthAdjust="spacingAndGlyphs">BASIC</text><text x="517.5" y="268" text-anchor="middle" font-family="Liberation Sans" font-weight="bold" font-size="40" fill="#1f2c8f" stroke="#1f2c8f" stroke-width="2.5" textLength="334" lengthAdjust="spacingAndGlyphs">PRESENTATION</text></g></svg>
<svg class="a" style="left:37px;top:320px;border-radius:5px" width="164" height="92" font-family="Liberation Sans"><rect width="164" height="92" rx="5" fill="#fcf8f5"/><path d="M88.2 0 H125.3 V46 Z" fill="#cdbf8e"/><path d="M125.3 0 H162.3 L125.3 46 Z" fill="#d3d890"/><path d="M88.2 92 H125.3 V46 Z" fill="#f5cfcf"/><path d="M125.3 92 H162.5 L125.3 46 Z" fill="#e08a86"/><circle cx="107.4" cy="66.7" r="5.1" fill="#1f2c8f"/><circle cx="152.5" cy="9.3" r="0.7" fill="#333"/><text x="13.3" y="32.8" font-size="6.5" font-weight="bold" fill="#1f2c8f" stroke="#1f2c8f" stroke-width="0.25" lengthAdjust="spacing" textLength="28.5">AGENDA</text><rect x="13.5" y="40.9" width="22" height="2.6" fill="#7a7690" opacity="0.4"/><rect x="13.5" y="48.4" width="35" height="2.6" fill="#7a7690" opacity="0.4"/><rect x="13.5" y="55.9" width="39" height="2.6" fill="#7a7690" opacity="0.4"/><rect x="13.5" y="63.4" width="18" height="2.6" fill="#7a7690" opacity="0.4"/><rect x="13.5" y="70.9" width="39" height="2.6" fill="#7a7690" opacity="0.4"/></svg>
<svg class="a" style="left:37px;top:434px" width="164" height="92" font-family="Liberation Sans"><defs><clipPath id="c3"><rect width="164" height="92" rx="5"/></clipPath><linearGradient id="p3" x1="0" y1="0" x2="0" y2="1"><stop offset="0" stop-color="#ecd0d0"/><stop offset="1" stop-color="#d9b4b4"/></linearGradient></defs><g clip-path="url(#c3)"><rect width="164" height="92" fill="#fcf8f5"/><rect y="46.4" width="164" height="45.6" fill="#cfd590"/><rect x="6.2" y="0" width="151.6" height="85.4" fill="#fcf8f5"/><rect x="6.2" y="0" width="58.2" height="85.4" fill="url(#p3)"/><path d="M8 2 H60 V40 H8 Z" fill="#efd6d6" opacity="0.55"/><path d="M14 6 H28 V30 H14 Z M34 6 H52 V28 H34 Z" fill="#f3dede" opacity="0.6"/><path d="M9 85.4 L12 48 C14 40 20 35 27 33 L45 33 C52 35 57 41 58 50 L62 85.4 Z" fill="#b79996"/><path d="M27 85.4 L26 37 L45 36 L44 85.4 Z" fill="#161010"/><ellipse cx="33.5" cy="21" rx="6" ry="7.5" fill="#3a2826"/><path d="M12 50 C9 46 12 41 17 44 L19 50 Z M36 49 C35 44 41 43 45 47 L42 52 Z" fill="#6a4e4c"/><path d="M6.2 60 L13 58 L12 85.4 H6.2 Z" fill="#2a2020"/><path d="M138.5 -38 A38 38 0 1 0 139 38 M163 0" fill="none"/><path d="M125 0 A38 38 0 0 0 163 38 L163 26 A26 26 0 0 1 137 0 Z" fill="#f5cdd3"/><circle cx="138.9" cy="13" r="5" fill="#1f2c8f"/><text x="78" y="44.8" font-size="6.5" font-weight="bold" fill="#1f2c8f" stroke="#1f2c8f" stroke-width="0.25" lengthAdjust="spacing" textLength="51.5">THE POWER OF</text><text x="78" y="52.4" font-size="6.5" font-weight="bold" fill="#1f2c8f" stroke="#1f2c8f" stroke-width="0.25" lengthAdjust="spacing" textLength="60">COMMUNICATION</text></g></svg>
<svg class="a" style="left:37px;top:548px" width="164" height="92" font-family="Liberation Sans"><defs><clipPath id="c4"><rect width="164" height="92" rx="5"/></clipPath><linearGradient id="b4" x1="0" y1="0" x2="1" y2="1"><stop offset="0" stop-color="#8d9bb0"/><stop offset="1" stop-color="#5d6a7e"/></linearGradient></defs><g clip-path="url(#c4)"><rect width="164" height="92" fill="#fcf8f5"/><rect width="164" height="47" fill="#f5cdd1"/><path d="M0 56 L6.2 47 V92 H0 Z" fill="#abc5e9"/><rect x="6.2" y="6.2" width="93.3" height="85.8" fill="#fcf8f5"/><path d="M80 92 L99.5 72 V92 Z" fill="#eef0df"/><rect x="99.5" y="6.2" width="58.3" height="85.8" fill="url(#b4)"/><rect x="101" y="6.2" width="10" height="55" fill="#9aa6b8" opacity="0.45"/><rect x="114" y="6.2" width="2" height="40" fill="#a9b3c2" opacity="0.5"/><path d="M117 72 L119 44 C121 37 127 34 133 34 C140 34 144 40 145 48 L147 72 Z" fill="#cdd6e2"/><path d="M133 12 C140 12 143 18 142 26 L141 40 C139 44 137 44 136 40 L135 26 Z" fill="#2a2f38"/><ellipse cx="131" cy="22" rx="4" ry="5.8" fill="#b9c3d1"/><rect x="114.5" y="37" width="2.6" height="13" rx="1" fill="#1c2028"/><path d="M100 50 L108 45 L121 66 L113 72 Z" fill="#8c97a8"/><rect x="99.5" y="70" width="58.3" height="9" fill="#353b47"/><rect x="99.5" y="79" width="58.3" height="13" fill="#8893a4"/><text x="13.5" y="40.2" font-size="6.5" font-weight="bold" fill="#1f2c8f" stroke="#1f2c8f" stroke-width="0.25" lengthAdjust="spacing" textLength="46.5">OVERCOMING</text><text x="13.5" y="47" font-size="6.5" font-weight="bold" fill="#1f2c8f" stroke="#1f2c8f" stroke-width="0.25" lengthAdjust="spacing" textLength="51.5">NERVOUSNESS</text><rect x="13.5" y="54" width="52" height="2" fill="#7a7690" opacity="0.35"/></g></svg>
<svg class="a" style="left:37px;top:662px" width="164" height="92" font-family="Liberation Sans"><defs><clipPath id="c5"><rect width="164" height="92" rx="5"/></clipPath></defs><g clip-path="url(#c5)"><rect width="164" height="92" fill="#fcf8f5"/><circle cx="50" cy="6" r="26" fill="#eef1f5"/><rect width="34.5" height="92" fill="#cfd590"/><path d="M0 59.4 L34.5 92 H0 Z" fill="#f5cdd1"/><path d="M17.5 75.9 L34.5 59.4 V92 Z" fill="#dcaa88"/><text x="48" y="26.6" font-size="6.5" font-weight="bold" fill="#1f2c8f" stroke="#1f2c8f" stroke-width="0.25" lengthAdjust="spacing" textLength="90">ENGAGING THE AUDIENCE</text><rect x="53" y="30.9" width="90" height="1.6" fill="#7a7690" opacity="0.35"/><rect x="53" y="34.9" width="16" height="1.6" fill="#7a7690" opacity="0.35"/><rect x="53" y="40.9" width="93" height="1.6" fill="#7a7690" opacity="0.35"/><rect x="53" y="44.4" width="52" height="1.6" fill="#7a7690" opacity="0.35"/><rect x="53" y="50.4" width="97" height="1.6" fill="#7a7690" opacity="0.35"/><rect x="53" y="53.9" width="17" height="1.6" fill="#7a7690" opacity="0.35"/><rect x="53" y="59.4" width="99" height="1.6" fill="#7a7690" opacity="0.35"/><rect x="53" y="62.99999999999999" width="56" height="1.6" fill="#7a7690" opacity="0.35"/><rect x="48.5" y="31.0" width="1" height="1" fill="#6e6a8a"/><rect x="48.5" y="41.0" width="1" height="1" fill="#6e6a8a"/><rect x="48.5" y="50.5" width="1" height="1" fill="#6e6a8a"/><rect x="48.5" y="59.5" width="1" height="1" fill="#6e6a8a"/><circle cx="152.5" cy="9.6" r="0.7" fill="#333"/></g></svg>
<svg class="a" style="left:37px;top:776px" width="164" height="51" font-family="Liberation Sans"><defs><clipPath id="c6"><path d="M0 51 V5 A5 5 0 0 1 5 0 H159 A5 5 0 0 1 164 5 V51 Z"/></clipPath></defs><g clip-path="url(#c6)"><rect width="164" height="51" fill="#fcf8f5"/><rect width="22.7" height="51" fill="#abc5e9"/><rect x="22.7" width="22.8" height="51" fill="#f5cdd1"/><circle cx="22.7" cy="61" r="15" fill="#c0d2ee"/><path d="M22.7 46 A15 15 0 0 0 7.7 61 H22.7 Z" fill="#1f2c8f"/><text x="60.4" y="39.6" font-size="6.5" font-weight="bold" fill="#1f2c8f" stroke="#1f2c8f" stroke-width="0.25" lengthAdjust="spacing" textLength="38.3">SELECTING</text><text x="60.4" y="46.7" font-size="6.5" font-weight="bold" fill="#1f2c8f" stroke="#1f2c8f" stroke-width="0.25" lengthAdjust="spacing" textLength="43">VISUAL AIDS</text><circle cx="152" cy="9.4" r="0.7" fill="#333"/></g></svg>
<div class="t" style="left:12.3px;top:202.0px;font-size:16px;color:#f0f0f0;-webkit-text-stroke:0.4px #f0f0f0">1</div>
<div class="t" style="left:12.3px;top:316.5px;font-size:16px;color:#f0f0f0;-webkit-text-stroke:0.4px #f0f0f0">2</div>
<div class="t" style="left:12.3px;top:430.5px;font-size:16px;color:#f0f0f0;-webkit-text-stroke:0.4px #f0f0f0">3</div>
<div class="t" style="left:12.3px;top:544.5px;font-size:16px;color:#f0f0f0;-webkit-text-stroke:0.4px #f0f0f0">4</div>
<div class="t" style="left:12.3px;top:658.5px;font-size:16px;color:#f0f0f0;-webkit-text-stroke:0.4px #f0f0f0">5</div>
<div class="t" style="left:12.3px;top:772.5px;font-size:16px;color:#f0f0f0;-webkit-text-stroke:0.4px #f0f0f0">6</div>
<div class="a" style="left:1228px;top:827px;width:42px;height:22px;background:#262626"></div>
<svg class="a" style="left:0;top:0" width="1600" height="849" font-family="Liberation Sans">
<text x="11.3" y="843.3" font-size="11.5" fill="#e0e0e0" stroke="#e0e0e0" stroke-width="0.3" textLength="61.2" lengthAdjust="spacingAndGlyphs" >Slide 1 of 13</text>
<g fill="none" stroke="#d8d8d8" stroke-width="1.2"><path d="M94.5 833.5 H100.5 L101 845.5 H94.5 Z M101 845.5 V834 L108 833 V839"/><path d="M102.5 842 L104.5 845 L109 838.5"/></g>
<text x="126.3" y="843.3" font-size="11.5" fill="#e0e0e0" stroke="#e0e0e0" stroke-width="0.3" textLength="68.0" lengthAdjust="spacingAndGlyphs" >English (India)</text>
<g fill="none" stroke="#d8d8d8" stroke-width="1.2"><circle cx="219.5" cy="832.8" r="2"/><path d="M213.5 836 C216 838 223 838 225.5 836 M216.5 837.5 V841 L214.5 846.5 M222.5 837.5 V840 M218 841 L220 845.5 L226.5 838.5"/></g>
<text x="229.9" y="843.3" font-size="11.5" fill="#e0e0e0" stroke="#e0e0e0" stroke-width="0.3" textLength="121.7" lengthAdjust="spacingAndGlyphs" >Accessibility: Good to go</text>
<g fill="none" stroke="#d8d8d8" stroke-width="1.3"><path d="M1160.5 838.7 H1177 M1160.5 842.6 H1177 M1160.5 846.5 H1177 M1165 834.5 L1168.5 831 L1172 834.5"/></g>
<text x="1177.4" y="843.4" font-size="11.5" fill="#e0e0e0" stroke="#e0e0e0" stroke-width="0.3" textLength="30.2" lengthAdjust="spacingAndGlyphs" >Notes</text>
<g fill="none" stroke="#d8d8d8" stroke-width="1.3"><rect x="1242" y="833" width="14.5" height="12"/><path d="M1245 833 V845 M1247 836 H1254 V840 H1247 Z M1245 842.5 H1256.5"/><rect x="1283.5" y="833.3" width="6" height="4.5"/><rect x="1292" y="833.3" width="6" height="4.5"/><rect x="1283.5" y="840.3" width="6" height="4.5"/><rect x="1292" y="840.3" width="6" height="4.5"/><path d="M1325.5 833.5 C1328 832.5 1331 832.5 1332.5 834.5 C1334 832.5 1337 832.5 1339 833.5 V845 C1337 844 1334 844 1332.5 845.5 C1331 844 1328 844 1325.5 845 Z M1332.5 834.5 V845.5 M1327.5 836.5 H1330.5 M1327.5 839 H1330.5 M1327.5 841.5 H1330.5 M1334.5 836.5 H1337.5 M1334.5 839 H1337.5 M1334.5 841.5 H1337.5"/><path d="M1366.5 833 H1380.5 M1367.5 833 V840 H1379.5 V833 M1373.5 840 V845.5 M1370 845.5 H1377 M1370.5 836 H1376.5"/><path d="M1400.5 838.7 H1409.5 M1523.2 838.7 H1531.7 M1527.5 834.5 V843"/></g>
<rect x="1414.3" y="838.9" width="104.3" height="1.3" fill="#b0b0b0"/>
<rect x="1465.5" y="835.8" width="1" height="7.5" fill="#b0b0b0"/>
<rect x="1451" y="832.9" width="6.2" height="11.8" fill="#a8a8a8"/>
<text x="1544.3" y="843.6" font-size="11.5" fill="#e0e0e0" stroke="#e0e0e0" stroke-width="0.3" textLength="21.5" lengthAdjust="spacingAndGlyphs" >78%</text>
<g fill="none" stroke="#d8d8d8" stroke-width="1.2"><rect x="1583.5" y="834.5" width="7.5" height="7.5"/><path d="M1584.5 833 L1587.2 830.5 L1590 833 M1584.5 843.5 L1587.2 846 L1590 843.5 M1581.5 835.5 L1579.3 838.2 L1581.5 841 M1593 835.5 L1595.2 838.2 L1593 841"/></g>
</svg>
</body></html>
